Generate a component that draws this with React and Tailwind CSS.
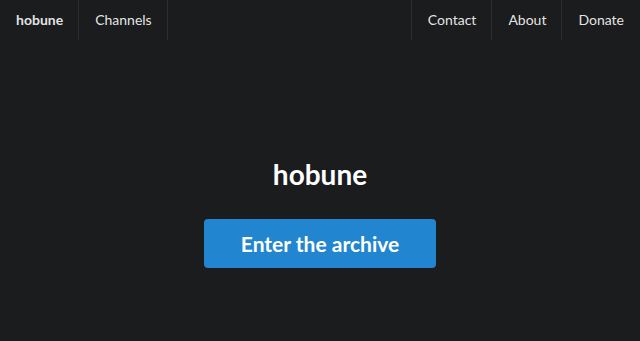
export default function App() {
  const font = { fontFamily: "Lato, 'Liberation Sans', sans-serif" };
  return (
    <div className="w-[640px] h-[341px] bg-[#1b1c1d] flex flex-col" style={font}>
      <nav className="flex h-[40px] text-[14px] text-[rgba(255,255,255,0.9)]">
        <div className="flex items-center pl-4 pr-[15px] pb-[2px] font-bold border-r border-[rgba(255,255,255,0.08)]">hobune</div>
        <div className="flex items-center pl-4 pr-[15px] pb-[2px] border-r border-[rgba(255,255,255,0.08)]">Channels</div>
        <div className="flex-1" />
        <div className="flex items-center pl-4 pr-[15px] pb-[2px] border-l border-[rgba(255,255,255,0.08)]">Contact</div>
        <div className="flex items-center pl-4 pr-[15px] pb-[2px] border-l border-[rgba(255,255,255,0.08)]">About</div>
        <div className="flex items-center px-4 pb-[2px] border-l border-[rgba(255,255,255,0.08)]">Donate</div>
      </nav>
      <div className="flex flex-col items-center pt-[116px]">
        <h1 className="text-[28px] font-bold text-white leading-[36px]">hobune</h1>
        <button className="mt-[27px] w-[232px] h-[49px] rounded-[4px] bg-[#2185d0] text-white text-[21px] font-bold">
          Enter the archive
        </button>
      </div>
    </div>
  );
}
